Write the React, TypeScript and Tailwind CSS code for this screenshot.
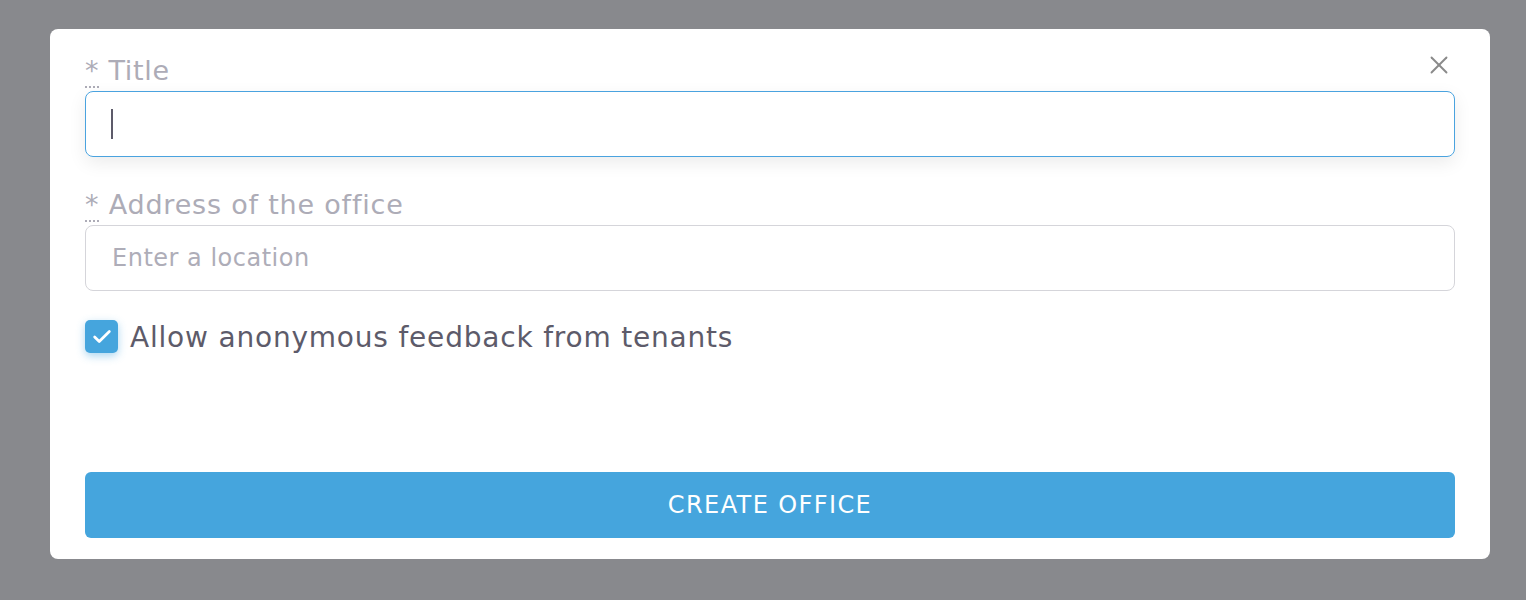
import { X, Check } from "lucide-react";

const font = { fontFamily: "'DejaVu Sans', sans-serif" };

export default function App() {
  return (
    <div className="min-h-[600px] w-full bg-[#88898d] pt-[29px] pl-[50px] pr-[36px] pb-[41px]" style={font}>
      <div className="relative rounded-lg bg-white h-[530px] px-[35px] pt-[22px] pb-[21px] flex flex-col">
        <button className="absolute right-[36px] top-[21px] text-[#8a8a8a]">
          <X className="w-[30px] h-[30px]" strokeWidth={1.5} />
        </button>

        <label className="text-[27px] leading-[40px] tracking-[0.7px] text-[#adacb7]">
          <abbr title="required" className="no-underline border-b-2 border-dotted border-[#adacb7]">*</abbr> Title
        </label>
        <div className="h-[66px] rounded-lg border border-[#4aa3df] shadow-[0_6px_18px_rgba(0,0,0,0.08)] flex items-center px-[25px]">
          <span className="w-[2px] h-[30px] bg-[#5d5b6a]" />
        </div>

        <label className="mt-[28px] text-[27px] leading-[40px] tracking-[0.8px] text-[#adacb7]">
          <abbr title="required" className="no-underline border-b-2 border-dotted border-[#adacb7]">*</abbr> Address of the office
        </label>
        <div className="h-[66px] rounded-lg border border-[#d5d5da] flex items-center px-[26px]">
          <span className="text-[24px] tracking-[0.5px] text-[#aeadb8]">Enter a location</span>
        </div>

        <div className="mt-[29px] flex items-start gap-[12px]">
          <span className="w-[33px] h-[33px] rounded-[5px] bg-[#45a5dd] shadow-[0_3px_8px_rgba(69,165,221,0.45)] flex items-center justify-center">
            <Check className="w-[22px] h-[22px] text-white" strokeWidth={3} />
          </span>
          <span className="text-[28px] leading-[36px] tracking-[0.8px] text-[#5d5b6a]">Allow anonymous feedback from tenants</span>
        </div>

        <div className="flex-1" />
        <button className="h-[66px] rounded-md bg-[#45a5dd] text-white text-[24px] font-medium tracking-[1.4px] uppercase">
          Create office
        </button>
      </div>
    </div>
  );
}
